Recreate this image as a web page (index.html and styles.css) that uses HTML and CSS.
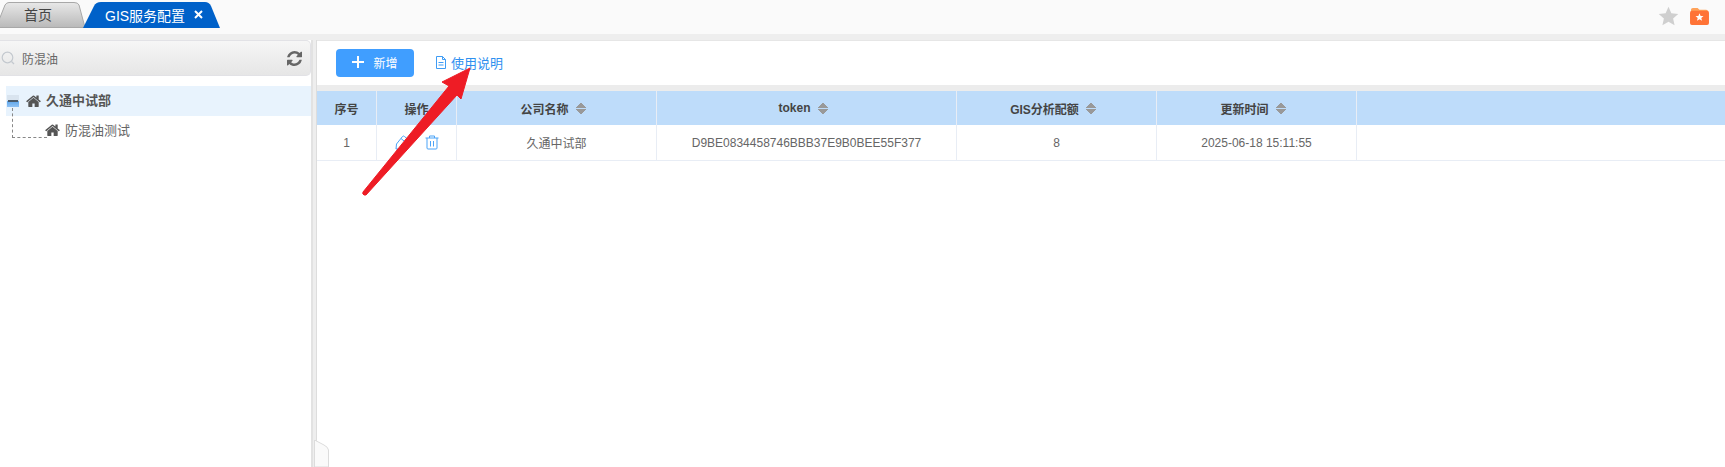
FILE: index.html
```html
<!DOCTYPE html>
<html lang="zh">
<head>
<meta charset="utf-8">
<title>GIS服务配置</title>
<link rel="stylesheet" href="styles.css">
</head>
<body>
<div class="app">
  <header class="topbar">
    <div class="tabs">
      <div class="tab tab-home">
        <svg class="tab-bg" width="86" height="28" viewBox="0 0 86 28"><defs><linearGradient id="tg" x1="0" y1="0" x2="0" y2="1"><stop offset="0" stop-color="#e8e8e8"/><stop offset="1" stop-color="#b9b9b9"/></linearGradient></defs><path d="M-4 27.5 L5 5 Q6.500 2.500 9 2.500 L74 2.500 Q78 2.500 79 5 L85 27.500 Z" fill="url(#tg)" stroke="#a8a8a8"/></svg>
        <span class="tab-label">首页</span>
      </div>
      <div class="tab tab-active">
        <svg class="tab-bg" width="138" height="28" viewBox="0 0 138 28"><path d="M0 28 L11 6 Q13 2 18 2 L122 2 Q126 2 128 6 L137 28 Z" fill="#0061c9"/></svg>
        <span class="tab-label">GIS服务配置</span>
        <svg class="tab-close" width="9" height="9" viewBox="0 0 9 9"><path d="M1 1 L8 8 M8 1 L1 8" stroke="#fff" stroke-width="2"/></svg>
      </div>
    </div>
    <div class="top-icons">
      <svg width="21" height="20" viewBox="0 0 24 23"><path d="M12 1 L15.300 8.300 L23.200 9.100 L17.300 14.400 L19 22.200 L12 18.200 L5 22.200 L6.700 14.400 L.8 9.100 L8.700 8.300 Z" fill="#cfcfcf"/></svg>
      <svg width="19" height="18" viewBox="0 0 20 19"><path d="M1 3 Q1 1 3 1 L8 1 L10 3 L17 3 Q19 3 19 5 L19 6 L1 6 Z" fill="#ffa25a"/><rect y="4" width="20" height="15" rx="2" fill="#ff7336"/><path d="M10 6.500 L11.200 9.400 L14.200 9.600 L11.900 11.500 L12.700 14.500 L10 12.800 L7.300 14.500 L8.100 11.500 L5.800 9.600 L8.800 9.400 Z" fill="#fff"/></svg>
    </div>
  </header>
  <main class="workspace">
    <aside class="side">
      <div class="side-head">
        <svg class="search-ico" width="14" height="14" viewBox="0 0 14 14"><circle cx="6.500" cy="6.500" r="5.300" fill="none" stroke="#c4c9cf" stroke-width="1.200"/><path d="M10.500 10.500 L13 13" stroke="#c4c9cf" stroke-width="1.200"/></svg>
        <span class="search-text">防混油</span>
        <svg class="refresh" width="15" height="15" viewBox="0 0 1536 1536"><path fill="#666" d="M1511 928q0 5-1 7-64 268-268 434.500T764 1536q-146 0-282.500-55T238 1324l-129 129q-19 19-45 19t-45-19-19-45V960q0-26 19-45t45-19h448q26 0 45 19t19 45-19 45l-137 137q71 66 161 102t187 36q134 0 250-65t186-179q11-17 53-117 8-23 30-23h192q13 0 22.500 9.500t9.500 22.500zm25-800v448q0 26-19 45t-45 19h-448q-26 0-45-19t-19-45 19-45l138-138Q969 256 768 256q-134 0-250 65T332 500q-11 17-53 117-8 23-30 23H50q-13 0-22.500-9.500T18 608v-7q65-268 270-434.500T768 0q146 0 284 55.500T1297 212l130-129q19-19 45-19t45 19 19 45z"/></svg>
      </div>
      <div class="tree">
        <div class="tree-row tree-row-root">
          <span class="toggle"><span class="toggle-bar"></span></span>
          <svg class="home" width="15" height="13" viewBox="0 0 1664 1408"><path fill="#555" d="M1408 768v480q0 26-19 45t-45 19H960V928H704v384H320q-26 0-45-19t-19-45V768q0-1 .5-3t.5-3l575-474 575 474q1 2 1 6zm223-69-62 74q-8 9-21 11h-3q-13 0-21-7L832 200 140 777q-12 8-24 7-13-2-21-11l-62-74q-8-10-7-23.500T37 654L756 55q32-26 76-26t76 26l244 204V64q0-14 9-23t23-9h192q14 0 23 9t9 23v408l219 182q10 8 11 21.500t-7 23.500z"/></svg>
          <span class="root-label">久通中试部</span>
        </div>
        <div class="tree-row tree-row-child">
          <span class="connector"></span>
          <svg class="home" width="15" height="13" viewBox="0 0 1664 1408"><path fill="#555" d="M1408 768v480q0 26-19 45t-45 19H960V928H704v384H320q-26 0-45-19t-19-45V768q0-1 .5-3t.5-3l575-474 575 474q1 2 1 6zm223-69-62 74q-8 9-21 11h-3q-13 0-21-7L832 200 140 777q-12 8-24 7-13-2-21-11l-62-74q-8-10-7-23.500T37 654L756 55q32-26 76-26t76 26l244 204V64q0-14 9-23t23-9h192q14 0 23 9t9 23v408l219 182q10 8 11 21.500t-7 23.500z"/></svg>
          <span class="child-label">防混油测试</span>
        </div>
      </div>
    </aside>
    <section class="content">
      <div class="toolbar">
        <button class="btn-add"><span class="plus"></span>新增</button>
        <a class="help-link">
          <svg width="10" height="13" viewBox="0 0 10 13"><path d="M.5 .5 H6.500 L9.500 3.500 V12.500 H.5 Z M6.500 .5 V3.500 H9.500 M2.500 6.500 H7.500 M2.500 9 H7.500" fill="none" stroke="#3f9cf5"/></svg>
          使用说明
        </a>
      </div>
      <div class="gap"></div>
      <div class="grid grid-head">
        <div class="cell">序号</div>
        <div class="cell">操作</div>
        <div class="cell">公司名称<span class="sort"></span></div>
        <div class="cell">token<span class="sort"></span></div>
        <div class="cell">GIS分析配额<span class="sort"></span></div>
        <div class="cell">更新时间<span class="sort"></span></div>
        <div class="cell cell-fill"></div>
      </div>
      <div class="grid grid-row">
        <div class="cell">1</div>
        <div class="cell ops">
          <svg width="15" height="15" viewBox="0 0 15 15"><path d="M1 14 L1.500 9 L7.500 1.500 Q8.500 .5 9.500 1.500 L13 4.500 Q14 5.500 13 6.500 L7 14 Z M6 3.500 L11.500 8" fill="none" stroke="#4aa3f7" stroke-width="1"/></svg>
          <svg width="14" height="15" viewBox="0 0 14 15"><path d="M.5 3 H13.500 M4.500 3 V1 H9.500 V3 M2 3 V13 Q2 14 3 14 H11 Q12 14 12 13 V3 M5.500 6 V11.500 M8.500 6 V11.500" fill="none" stroke="#4aa3f7" stroke-width="1"/></svg>
        </div>
        <div class="cell">久通中试部</div>
        <div class="cell">D9BE0834458746BBB37E9B0BEE55F377</div>
        <div class="cell">8</div>
        <div class="cell">2025-06-18 15:11:55</div>
        <div class="cell cell-fill"></div>
      </div>
    </section>
  </main>
  <svg class="fold" width="16" height="27" viewBox="0 0 16 27"><path d="M.5 27 V0 L10 5 Q14 7 14.500 10 V27 Z" fill="#fafafa" stroke="#dcdcdc"/></svg>
  <svg class="arrow" width="130" height="145" viewBox="0 0 130 145"><path d="M1 140 Q0 142 2 143 L4 143 L95 43 L99 47 L108 16 L80 30 L87 34 Z" fill="#ee1c25" stroke="#ee1c25" stroke-linejoin="round"/></svg>
</div>
</body>
</html>
```

FILE: styles.css
```css
* { box-sizing: border-box; }
html, body { margin: 0; height: 100%; }
body {
  font-family: "Liberation Sans", "Noto Sans CJK SC", sans-serif;
  font-size: 12px;
  color: #666;
  background: #fff;
  overflow: hidden;
}
.app { position: relative; width: 1725px; height: 467px; overflow: hidden; }
.topbar {
  height: 34px;
  background: #fafafa;
  display: flex;
  justify-content: space-between;
  align-items: flex-start;
}
.tabs { display: flex; }
.tab { position: relative; height: 28px; display: flex; align-items: center; }
.tab-bg { position: absolute; left: 0; top: 0; }
.tab-label, .tab-close { position: relative; }
.tab-home { width: 83px; padding-left: 24px; font-size: 14px; color: #444; }
.tab-active { width: 138px; padding-left: 22px; font-size: 14px; color: #fff; padding-top: 1px; }
.tab-close { margin-left: 9px; }
.top-icons { display: flex; align-items: center; gap: 11px; padding: 6px 16px 0 0; }
.workspace {
  height: 433px;
  display: flex;
  background: #eee;
  padding-top: 6px;
}
.side {
  width: 313px;
  background: #fff;
  border-right: 2px solid #e2e2e2;
}
.side-head {
  height: 36px;
  display: flex;
  align-items: center;
  background: linear-gradient(#f6f6f6, #e6e6e6);
  border: 1px solid #e2e2e6;
  border-left: 0;
  border-radius: 0 5px 5px 0;
  padding: 0 8px 0 1px;
  font-size: 12px;
  color: #666;
}
.search-text { margin-left: 7px; flex: 1; }
.tree { padding: 10px 0 0 6px; }
.tree-row { display: flex; align-items: center; height: 30px; }
.tree-row-root { background: #e8f3fd; font-weight: 700; font-size: 13px; color: #555; }
.tree-row-child { position: relative; height: 29px; font-size: 13px; color: #666; }
.toggle {
  width: 12px;
  height: 12px;
  margin: 0 7px 0 1px;
  background: linear-gradient(#d9e4ef 0 50%, #5ea6ec 50%, #8fc2f4);
  position: relative;
  display: flex;
  align-items: center;
  justify-content: center;
}
.toggle-bar { width: 10px; height: 2px; background: #4a5a6a; }
.root-label { margin-left: 5px; padding-bottom: 3px; }
.connector {
  width: 35px;
  height: 30px;
  margin: -15px -2px 0 6px;
  border-left: 1px dashed #888;
  border-bottom: 1px dashed #888;
}
.child-label { margin-left: 5px; padding-bottom: 2px; }
.content { flex: 1; margin-left: 3px; background: #fff; border-left: 1px solid #ddd; }
.toolbar {
  height: 45px;
  display: flex;
  align-items: center;
  padding: 0 0 0 19px;
  background: #fff;
  border-top: 1px solid #e6e6e6;
}
.btn-add {
  width: 78px;
  height: 28px;
  border: 0;
  border-radius: 4px;
  padding: 0 0 2px;
  background: #409eff;
  color: #fff;
  font: 12px "Liberation Sans", "Noto Sans CJK SC", sans-serif;
  display: flex;
  align-items: center;
  justify-content: center;
  gap: 9px;
}
.plus {
  width: 12px;
  height: 12px;
  background:
    linear-gradient(#fff, #fff) center / 12px 2px no-repeat,
    linear-gradient(#fff, #fff) center / 2px 12px no-repeat;
}
.help-link {
  margin-left: 22px;
  display: flex;
  align-items: center;
  gap: 5px;
  padding-bottom: 2px;
  color: #2e90f0;
  font-size: 13px;
}
.gap { height: 6px; background: #ececec; }
.grid {
  display: grid;
  grid-template-columns: 60px 80px 200px 300px 200px 200px 1fr;
}
.grid-head { height: 34px; background: #bedcfa; color: #444; font-weight: 700; font-size: 12px; }
.grid-row { height: 36px; border-bottom: 1px solid #e8edf5; }
.cell {
  display: flex;
  align-items: center;
  justify-content: center;
  border-right: 1px solid #e8edf5;
}
.cell-fill { border-right: 0; }
.sort {
  width: 10px;
  height: 13px;
  margin: 0 7px;
  background:
    linear-gradient(to bottom right, transparent 50%, #999 50%) left top / 5px 6px no-repeat,
    linear-gradient(to bottom left, transparent 50%, #999 50%) right top / 5px 6px no-repeat,
    linear-gradient(to top right, transparent 50%, #999 50%) left bottom / 5px 6px no-repeat,
    linear-gradient(to top left, transparent 50%, #999 50%) right bottom / 5px 6px no-repeat;
}
.ops { gap: 15px; }
.fold { position: absolute; left: 314px; top: 440px; }
.arrow { position: absolute; left: 362px; top: 52px; }
```
